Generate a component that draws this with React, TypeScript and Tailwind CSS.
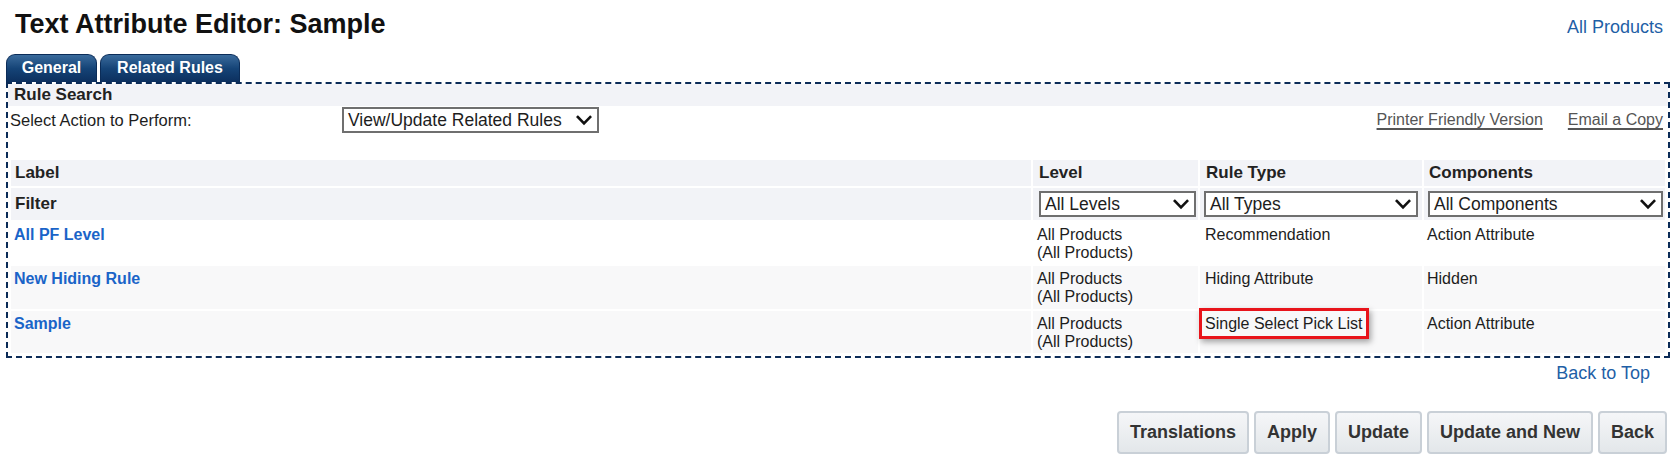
import React from "react";

type Rule = {
  label: string;
  level: string[];
  ruleType: string;
  component: string;
  highlight?: boolean;
  shaded?: boolean;
};

const rules: Rule[] = [
  {
    label: "All PF Level",
    level: ["All Products", "(All Products)"],
    ruleType: "Recommendation",
    component: "Action Attribute",
  },
  {
    label: "New Hiding Rule",
    level: ["All Products", "(All Products)"],
    ruleType: "Hiding Attribute",
    component: "Hidden",
    shaded: true,
  },
  {
    label: "Sample",
    level: ["All Products", "(All Products)"],
    ruleType: "Single Select Pick List",
    component: "Action Attribute",
    highlight: true,
    shaded: true,
  },
];

function Chevron() {
  return (
    <svg width="16" height="11" viewBox="0 0 16 11" className="shrink-0">
      <path d="M1.8 2 L8 8.4 L14.2 2" fill="none" stroke="#111" strokeWidth="2.6" strokeLinecap="square" />
    </svg>
  );
}

function FakeSelect({ value, className }: { value: string; className: string }) {
  return (
    <div
      className={`flex h-[26px] items-center justify-between border-2 border-[#6f6f6f] bg-white pl-[4px] pr-[5px] text-[17.5px] leading-[20px] text-[#1d1d1d] ${className}`}
    >
      <span>{value}</span>
      <Chevron />
    </div>
  );
}

function PageButton({ children }: { children: React.ReactNode }) {
  return (
    <button
      type="button"
      className="h-[43px] rounded-[4px] border-2 border-[#c9d0d7] bg-gradient-to-b from-[#f5f6f8] to-[#e3e7ea] px-[11px] text-[18px] font-bold text-[#333]"
    >
      {children}
    </button>
  );
}

export default function App() {
  return (
    <div className="min-h-[464px] w-full bg-white font-['Liberation_Sans',Arial,sans-serif] text-[#1d1d1d]">
      <div className="flex items-baseline justify-between pl-[15px] pr-[8px] pt-[9px]">
        <h1 className="text-[27px] font-bold leading-[30px] text-[#111]">Text Attribute Editor: Sample</h1>
        <a className="text-[18px] leading-[20px] text-[#1f5fa6]">All Products</a>
      </div>

      <div className="mt-[15px] flex gap-[3px] pl-[6px]">
        <div className="h-[28px] w-[91px] rounded-t-[9px] border border-b-0 border-[#0b2c58] bg-gradient-to-b from-[#3a6b9c] via-[#154477] to-[#0c2f5e] text-center text-[16px] font-bold leading-[26px] text-white">
          General
        </div>
        <div className="h-[28px] w-[140px] rounded-t-[9px] border border-b-0 border-[#0b2c58] bg-gradient-to-b from-[#3a6b9c] via-[#154477] to-[#0c2f5e] text-center text-[16px] font-bold leading-[26px] text-white">
          Related Rules
        </div>
      </div>

      <div className="ml-[6px] mr-[1px] border-2 border-dashed border-[#0b2b57]">
        <div className="h-[22px] bg-[#f2f3f7] pl-[6px] text-[17px] font-bold leading-[22px] text-[#222]">
          Rule Search
        </div>

        <div className="flex h-[28px] items-center pr-[5px]">
          <div className="w-[334px] pl-[2px] text-[16.5px] leading-[20px]">Select Action to Perform:</div>
          <FakeSelect value="View/Update Related Rules" className="w-[257px]" />
          <div className="ml-auto flex gap-[25px] text-[16px] leading-[20px] text-[#555]">
            <a className="underline decoration-[#555] decoration-2 underline-offset-[3px]">Printer Friendly Version</a>
            <a className="underline decoration-[#555] decoration-2 underline-offset-[3px]">Email a Copy</a>
          </div>
        </div>

        <div className="mx-[3px] mt-[26px] mb-[3px] grid grid-cols-[1fr_165px_222px_241px] gap-[2px]">
          <div className="h-[26px] bg-[#f2f3f7] pl-[4px] text-[17px] font-bold leading-[26px] text-[#222]">Label</div>
          <div className="h-[26px] bg-[#f2f3f7] pl-[6px] text-[17px] font-bold leading-[26px] text-[#222]">Level</div>
          <div className="h-[26px] bg-[#f2f3f7] pl-[6px] text-[17px] font-bold leading-[26px] text-[#222]">Rule Type</div>
          <div className="h-[26px] bg-[#f2f3f7] pl-[5px] text-[17px] font-bold leading-[26px] text-[#222]">Components</div>

          <div className="flex h-[32px] items-center bg-[#f2f3f7] pl-[4px] text-[17px] font-bold text-[#222]">Filter</div>
          <div className="flex h-[32px] items-center bg-[#f2f3f7] pl-[6px]">
            <FakeSelect value="All Levels" className="w-[157px]" />
          </div>
          <div className="flex h-[32px] items-center bg-[#f2f3f7] pl-[4px]">
            <FakeSelect value="All Types" className="w-[214px]" />
          </div>
          <div className="flex h-[32px] items-center bg-[#f2f3f7] pl-[4px]">
            <FakeSelect value="All Components" className="w-[235px]" />
          </div>

          {rules.map((rule, i) => {
            const bg = rule.shaded ? "bg-[#f8f8f9]" : "bg-white";
            const h = i === 1 ? "h-[43px]" : "h-[42px]";
            return (
              <React.Fragment key={rule.label}>
                <div className={`${bg} ${h} pl-[3px] pt-[4px] text-[16px] font-bold leading-[18px] text-[#1a64c8]`}>
                  <a>{rule.label}</a>
                </div>
                <div className={`${bg} ${h} pl-[4px] pt-[4px] text-[16px] leading-[18px]`}>
                  {rule.level.map((line) => (
                    <div key={line}>{line}</div>
                  ))}
                </div>
                <div className={`${bg} ${h} pl-[5px] pt-[4px] text-[16px] leading-[18px]`}>
                  {rule.highlight ? (
                    <span className="relative inline-block">
                      {rule.ruleType}
                      <span className="pointer-events-none absolute -top-[7px] -right-[7px] -bottom-[6px] -left-[6px] border-[3px] border-[#e8141b] shadow-[2px_3px_6px_rgba(0,0,0,0.35)]" />
                    </span>
                  ) : (
                    rule.ruleType
                  )}
                </div>
                <div className={`${bg} ${h} pl-[3px] pt-[4px] text-[16px] leading-[18px]`}>{rule.component}</div>
              </React.Fragment>
            );
          })}
        </div>
      </div>

      <div className="mt-[5px] flex justify-end pr-[21px]">
        <a className="text-[18px] leading-[20px] text-[#1f5fa6]">Back to Top</a>
      </div>

      <div className="mt-[28px] flex justify-end gap-[5px] pr-[4px]">
        <PageButton>Translations</PageButton>
        <PageButton>Apply</PageButton>
        <PageButton>Update</PageButton>
        <PageButton>Update and New</PageButton>
        <PageButton>Back</PageButton>
      </div>
    </div>
  );
}
